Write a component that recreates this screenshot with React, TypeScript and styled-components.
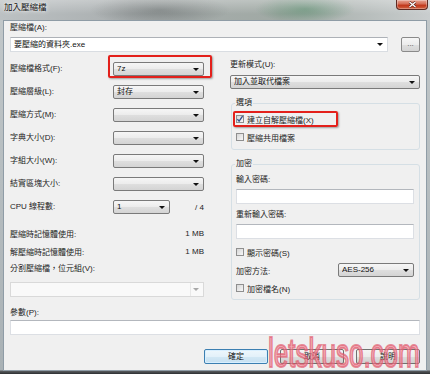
import React from 'react';
import styled, { createGlobalStyle, css } from 'styled-components';

const GlobalStyle = createGlobalStyle`
  html, body {
    margin: 0;
    padding: 0;
    background: #ffffff;
  }
  body {
    font-family: "Liberation Sans", "Noto Sans CJK TC", sans-serif;
    font-size: 8px;
    color: #1c1c1c;
  }
`;

type ComboKind = 'button' | 'edit' | 'disabled';

const settings = [
    { label: '壓縮檔格式(F):', value: '7z', marked: true },
    { label: '壓縮層級(L):', value: '封存' },
    { label: '壓縮方式(M):', value: '' },
    { label: '字典大小(D):', value: '' },
    { label: '字組大小(W):', value: '' },
    { label: '結實區塊大小:', value: '' },
];

const memory = [
    { label: '壓縮時記憶體使用:', value: '1 MB' },
    { label: '解壓縮時記憶體使用:', value: '1 MB' },
];

interface IComboProps {
    value?: string;
    kind?: ComboKind;
    width?: number;
    marked?: boolean;
    mt?: number;
}

const Combo: React.FC<IComboProps> = ({ value = '', kind = 'button', width, marked, mt }) => (
    <ComboBox $kind={kind} $width={width} $marked={marked} $mt={mt}>
        <ComboText>{value}</ComboText>
        {kind === 'disabled' && <ComboDivider />}
        <Arrow $disabled={kind === 'disabled'} />
    </ComboBox>
);

const CheckBox: React.FC<{ checked?: boolean }> = ({ checked }) => (
    <Box>
        {checked && (
            <svg width='8' height='8' viewBox='0 0 8 8'>
                <path d='M1.4 4.2 L3.1 6.2 L6.6 1.2' fill='none' stroke='#34508e' strokeWidth='1.3' />
            </svg>
        )}
    </Box>
);

export default function App() {
    return (
        <>
            <GlobalStyle />
            <Window>
                <TitleBar>
                    <Title>加入壓縮檔</Title>
                    <CloseButton>
                        <svg width='9' height='7' viewBox='0 0 9 7'>
                            <path d='M1.5 1 L7.5 6 M7.5 1 L1.5 6' stroke='#5a2018' strokeWidth='2.6' />
                            <path d='M1.5 1 L7.5 6 M7.5 1 L1.5 6' stroke='#ffffff' strokeWidth='1.4' />
                        </svg>
                    </CloseButton>
                </TitleBar>
                <Client>
                    <Label>壓縮檔(A):</Label>
                    <TopRow>
                        <Combo kind='edit' value='要壓縮的資料夾.exe' />
                        <SmallButton>...</SmallButton>
                    </TopRow>
                    <Columns>
                        <LeftColumn>
                            {settings.map((s, i) => (
                                <SettingRow key={i}>
                                    <RowLabel>{s.label}</RowLabel>
                                    <Combo value={s.value} width={91} marked={s.marked} />
                                </SettingRow>
                            ))}
                            <SettingRow>
                                <RowLabel>CPU 線程數:</RowLabel>
                                <Combo value='1' width={57} />
                                <Value>/ 4</Value>
                            </SettingRow>
                            {memory.map((m, i) => (
                                <MemoryRow key={i} $first={i === 0}>
                                    <span>{m.label}</span>
                                    <Value>{m.value}</Value>
                                </MemoryRow>
                            ))}
                            <Label $mt={5}>分割壓縮檔，位元組(V):</Label>
                            <Combo kind='disabled' mt={7} />
                        </LeftColumn>
                        <RightColumn>
                            <Label $mt={1}>更新模式(U):</Label>
                            <Combo value='加入並取代檔案' mt={4} />
                            <GroupBox $mt={8} $pb={5}>
                                <Legend>選項</Legend>
                                <CheckRow $mt={3} $marked>
                                    <CheckBox checked />
                                    <span>建立自解壓縮檔(X)</span>
                                </CheckRow>
                                <CheckRow $mt={4}>
                                    <CheckBox />
                                    <span>壓縮共用檔案</span>
                                </CheckRow>
                            </GroupBox>
                            <GroupBox $mt={8} $pb={4}>
                                <Legend>加密</Legend>
                                <Label $mt={4}>輸入密碼:</Label>
                                <TextBox $mt={3} />
                                <Label $mt={5}>重新輸入密碼:</Label>
                                <TextBox $mt={3} />
                                <CheckRow $mt={6}>
                                    <CheckBox />
                                    <span>顯示密碼(S)</span>
                                </CheckRow>
                                <MethodRow>
                                    <span>加密方法:</span>
                                    <Combo value='AES-256' width={76} />
                                </MethodRow>
                                <CheckRow $mt={4}>
                                    <CheckBox />
                                    <span>加密檔名(N)</span>
                                </CheckRow>
                            </GroupBox>
                        </RightColumn>
                    </Columns>
                    <Label $mt={7}>參數(P):</Label>
                    <TextBox $mt={1} />
                    <ButtonRow>
                        <Button $isDefault>確定</Button>
                        <Button>取消</Button>
                        <Button>說明</Button>
                    </ButtonRow>
                </Client>
                <Watermark>letskuso.com</Watermark>
            </Window>
        </>
    );
}

const Window = styled.div`
    position: relative;
    width: 430px;
    height: 374px;
    display: flex;
    flex-direction: column;
    overflow: hidden;
    background: linear-gradient(
        to bottom,
        #c2c8ca 0,
        #a9b1b5 calc(100% - 4px),
        #5a5d60 calc(100% - 3px),
        #2d2f31 100%
    );
`;
const TitleBar = styled.div`
    flex: none;
    height: 20px;
    display: flex;
    align-items: flex-start;
    padding-left: 4px;
    background:
        linear-gradient(to bottom, rgba(255, 255, 255, 0.3), rgba(255, 255, 255, 0) 70%),
        radial-gradient(ellipse 70px 16px at 160px 10px, rgba(70, 76, 76, 0.4), rgba(70, 76, 76, 0)),
        radial-gradient(ellipse 50px 14px at 305px 9px, rgba(60, 125, 85, 0.5), rgba(60, 125, 85, 0)),
        linear-gradient(to right, #bcc1c3, #a9aeaf 30%, #a0a9a4 65%, #c9cdce);
`;
const Title = styled.span`
    font-size: 8.5px;
    line-height: 14px;
    color: #111111;
    text-shadow: 0 0 5px rgba(255, 255, 255, 0.9), 0 0 2px rgba(255, 255, 255, 0.8);
`;
const CloseButton = styled.div`
    margin-left: auto;
    margin-right: 2px;
    width: 32px;
    height: 10px;
    box-sizing: border-box;
    display: flex;
    align-items: center;
    justify-content: center;
    border: 1px solid #5e2a22;
    border-top: none;
    border-radius: 0 0 4px 4px;
    background: linear-gradient(to bottom, #e8a493 0%, #d6715a 40%, #c2391d 60%, #d0603f 100%);
    box-shadow: inset 0 0 0 1px rgba(255, 255, 255, 0.3);
`;
const Client = styled.div`
    flex: 1;
    margin: 0 3px 3px;
    border: 1px solid #8f9ca6;
    background: #f0f0f0;
    padding: 1px 6px 0;
    display: flex;
    flex-direction: column;
`;
const Label = styled.div<{ $mt?: number }>`
    margin-top: ${({ $mt }) => $mt ?? 0}px;
    line-height: 12px;
    white-space: nowrap;
`;
const TopRow = styled.div`
    display: flex;
    align-items: flex-start;
    gap: 13px;
    margin-top: 3px;
`;
const comboKinds = {
    button: css`
        height: 14px;
        border: 1px solid #7a7a7a;
        border-radius: 2px;
        background: linear-gradient(to bottom, #f6f6f6, #ececec 50%, #dfdfdf 50%, #d4d4d4);
    `,
    edit: css`
        height: 15px;
        flex: 1;
        border: 1px solid #d9dde2;
        border-top-color: #adb1b7;
        background: #ffffff;
    `,
    disabled: css`
        height: 15px;
        border: 1px solid #d9d9d9;
        background: #f9f9f9;
    `,
};
const ComboBox = styled.div<{ $kind: ComboKind; $width?: number; $marked?: boolean; $mt?: number }>`
    position: relative;
    box-sizing: border-box;
    display: flex;
    align-items: center;
    flex: none;
    width: ${({ $width }) => ($width ? `${$width}px` : '100%')};
    margin-top: ${({ $mt }) => $mt ?? 0}px;
    padding: 0 3px 0 3px;
    color: #111111;
    ${({ $kind }) => comboKinds[$kind]}
    ${({ $marked }) => $marked && css`
        &::after {
            content: '';
            position: absolute;
            left: -6px;
            right: -9px;
            top: -8px;
            bottom: -3px;
            border: 2px solid #e3201b;
            border-radius: 2px;
            box-shadow: 1px 1px 2px rgba(0, 0, 0, 0.35);
        }
    `}
`;
const ComboText = styled.span`
    flex: 1;
    line-height: 12px;
    white-space: nowrap;
    overflow: hidden;
`;
const ComboDivider = styled.span`
    align-self: stretch;
    width: 1px;
    margin-right: 2px;
    background: #e8e8e8;
`;
const Arrow = styled.span<{ $disabled?: boolean }>`
    width: 0;
    height: 0;
    margin-right: 1px;
    border-left: 3px solid transparent;
    border-right: 3px solid transparent;
    border-top: 3px solid ${({ $disabled }) => ($disabled ? '#a8a8a8' : '#111111')};
`;
const SmallButton = styled.button`
    box-sizing: border-box;
    width: 19px;
    height: 15px;
    padding: 0 0 3px;
    border: 1px solid #8a8a8a;
    border-radius: 2px;
    background: linear-gradient(to bottom, #f6f6f6, #ececec 50%, #dfdfdf 50%, #d4d4d4);
    font: 8px "Liberation Sans", sans-serif;
    color: #555555;
`;
const Columns = styled.div`
    display: grid;
    grid-template-columns: 194px 190px;
    column-gap: 26px;
    align-items: start;
    margin-top: 6px;
`;
const LeftColumn = styled.div`
    display: flex;
    flex-direction: column;
    padding-top: 4px;
`;
const SettingRow = styled.div`
    display: flex;
    align-items: center;
    height: 14px;
    margin-top: 9px;
    &:first-child {
        margin-top: 0;
    }
`;
const RowLabel = styled.span`
    width: 103px;
    flex: none;
    line-height: 12px;
    white-space: nowrap;
`;
const Value = styled.span`
    margin-left: auto;
    white-space: nowrap;
`;
const MemoryRow = styled.div<{ $first?: boolean }>`
    display: flex;
    align-items: center;
    height: 14px;
    margin-top: ${({ $first }) => ($first ? 12 : 4)}px;
    white-space: nowrap;
`;
const RightColumn = styled.div`
    display: flex;
    flex-direction: column;
`;
const GroupBox = styled.fieldset<{ $mt: number; $pb: number }>`
    margin: ${({ $mt }) => $mt}px 0 0 1px;
    padding: 0 5px ${({ $pb }) => $pb}px 4px;
    min-width: 0;
    border: 1px solid #d5dfe5;
    border-radius: 3px;
    display: flex;
    flex-direction: column;
`;
const Legend = styled.legend`
    padding: 0 1px;
    margin-left: -1px;
    line-height: 12px;
    color: #1c1c1c;
`;
const CheckRow = styled.div<{ $mt: number; $marked?: boolean }>`
    position: relative;
    display: flex;
    align-items: center;
    gap: 3px;
    height: 14px;
    margin-top: ${({ $mt }) => $mt}px;
    white-space: nowrap;
    ${({ $marked }) => $marked && css`
        width: 96px;
        &::after {
            content: '';
            position: absolute;
            left: -3px;
            right: -6px;
            top: -1px;
            bottom: -1px;
            border: 2px solid #e3201b;
            border-radius: 2px;
            box-shadow: 1px 1px 2px rgba(0, 0, 0, 0.35);
        }
    `}
`;
const Box = styled.span`
    box-sizing: border-box;
    flex: none;
    width: 8px;
    height: 8px;
    display: flex;
    border: 1px solid #8f8f8f;
    background: linear-gradient(135deg, #d6d6d6, #f7f7f7);
    svg {
        margin: -1px;
    }
`;
const TextBox = styled.div<{ $mt: number }>`
    box-sizing: border-box;
    height: 15px;
    margin-top: ${({ $mt }) => $mt}px;
    border: 1px solid #dcdfe4;
    border-top-color: #b3b7bd;
    background: #ffffff;
`;
const MethodRow = styled.div`
    display: flex;
    align-items: center;
    justify-content: space-between;
    height: 14px;
    margin-top: 4px;
    white-space: nowrap;
`;
const ButtonRow = styled.div`
    display: flex;
    justify-content: flex-end;
    gap: 12px;
    margin-top: 14px;
`;
const Button = styled.button<{ $isDefault?: boolean }>`
    box-sizing: border-box;
    width: 64px;
    height: 15px;
    padding: 0;
    border: 1px solid #707070;
    border-radius: 2px;
    background: linear-gradient(to bottom, #f4f4f4, #ebebeb 50%, #dddddd 50%, #d0d0d0);
    font: 8px "Liberation Sans", "Noto Sans CJK TC", sans-serif;
    line-height: 12px;
    color: #111111;
    ${({ $isDefault }) => $isDefault && css`
        border-color: #3c7fb1;
        background: linear-gradient(to bottom, #eef7fc, #e3f1fa 50%, #d3e8f5 50%, #c6e0f1);
        box-shadow: inset 0 0 0 1px #d8efff;
    `}
`;
const Watermark = styled.div`
    position: absolute;
    left: 268px;
    top: 333px;
    font-family: "Liberation Sans", sans-serif;
    font-size: 40px;
    line-height: 40px;
    white-space: nowrap;
    color: rgba(245, 140, 155, 0.6);
    -webkit-text-stroke: 2px rgba(222, 82, 102, 0.65);
    transform: scaleX(0.65);
    transform-origin: left top;
    pointer-events: none;
`;
